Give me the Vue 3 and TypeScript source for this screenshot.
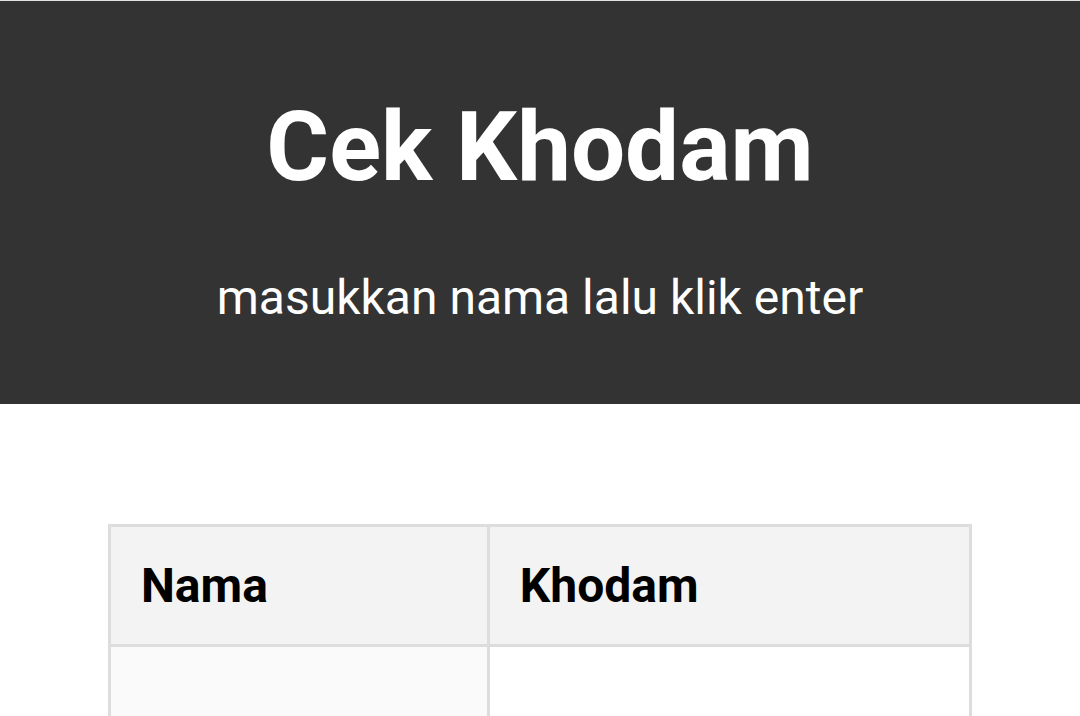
<script setup lang="ts">
interface Row {
  nama: string
  khodam: string
}

const columns: string[] = ['Nama', 'Khodam']
const rows: Row[] = [{ nama: '', khodam: '' }]
</script>

<template>
  <div class="page">
    <header class="hero">
      <h1>Cek Khodam</h1>
      <p>masukkan nama lalu klik enter</p>
    </header>
    <main>
      <table>
        <thead>
          <tr>
            <th v-for="column in columns" :key="column" scope="col">{{ column }}</th>
          </tr>
        </thead>
        <tbody>
          <tr v-for="(row, index) in rows" :key="index">
            <td class="name-cell">{{ row.nama }}</td>
            <td>{{ row.khodam }}</td>
          </tr>
        </tbody>
      </table>
    </main>
  </div>
</template>

<style>
body {
  margin: 0;
  background: #ffffff;
}
</style>

<style scoped>
.page {
  height: 100vh;
  overflow: hidden;
  font-family: Roboto, sans-serif;
  font-size: 48px;
  line-height: 57px;
  color: #000000;
}

.hero {
  box-sizing: border-box;
  border-top: 1px solid #e0e4e0;
  padding: 90px 60px 78px;
  background: #333333;
  color: #ffffff;
  text-align: center;
}

h1 {
  margin: 0 0 66px;
  font-size: 96px;
  line-height: 112px;
  font-weight: 700;
}

p {
  margin: 0;
}

main {
  padding: 120px 10% 0;
}

table {
  width: 100%;
  table-layout: fixed;
  border-collapse: collapse;
}

th,
td {
  box-sizing: border-box;
  border: 3px solid #dddddd;
  padding: 30px;
  text-align: left;
}

th {
  background: #f3f3f3;
  font-weight: 700;
}

th:first-child {
  width: 44%;
}

td {
  height: 120px;
}

.name-cell {
  background: #fafafa;
}
</style>
